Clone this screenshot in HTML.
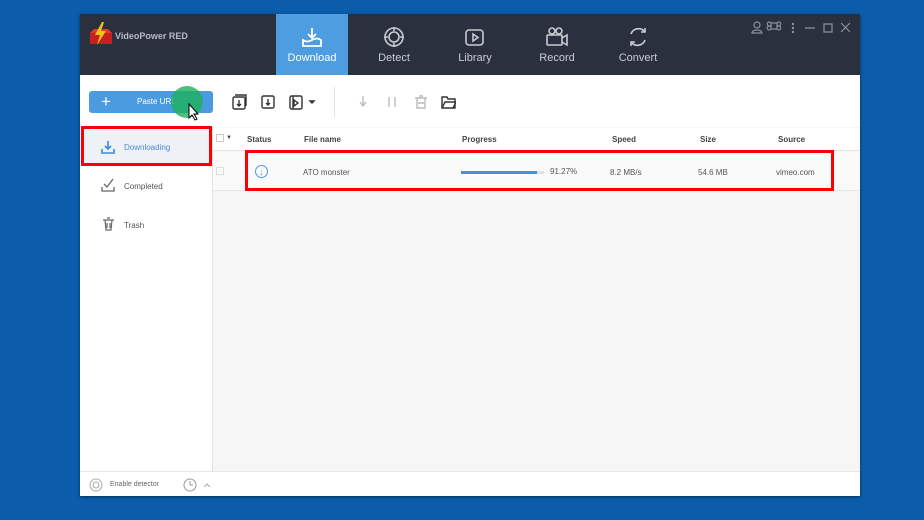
<!DOCTYPE html>
<html><head><style>
*{margin:0;padding:0;box-sizing:border-box}
body{width:924px;height:520px;background:#0b5dab;font-family:"Liberation Sans",sans-serif;position:relative;overflow:hidden}
.a{position:absolute}
.win{left:80px;top:14px;width:780px;height:482px;background:#fff;box-shadow:0 1px 3px rgba(0,0,0,.5)}
.hdr{left:0;top:0;width:780px;height:61px;background:#2a303d}
.tab{top:0;width:72px;height:61px;color:#c8ccd2;font-size:11px;text-align:center}
.tab svg{display:block;margin:12px auto 4px}
.t{font-size:8px;color:#444}
.s{font-size:8px;color:#555}
</style></head><body>
<div class="a win">
 <div class="a hdr">
  <svg class="a" style="left:9px;top:7px" width="24" height="26" viewBox="0 0 24 26"><path d="M1 12h22v11H1z" fill="#c8201e"/><path d="M1 12l4-4h14l4 4z" fill="#e23a2a"/><path d="M13 1L6 14h5l-3 10 9-14h-5l3-9z" fill="#f6c21a"/></svg>
  <div class="a" style="left:35px;top:17px;color:#b8bcc4;font-size:9px;font-weight:bold">VideoPower RED</div>
  <div class="a tab" style="left:196px;background:#4d9de0;color:#fff">
   <svg width="22" height="22" viewBox="0 0 22 22" fill="none" stroke="#fff" stroke-width="1.8"><path d="M11 2v10M7 8l4 4 4-4"/><path d="M2 14c3 2 5 2 9 0s6-2 9 0v6H2z"/></svg>Download</div>
  <div class="a tab" style="left:278px"><svg width="22" height="22" viewBox="0 0 22 22" fill="none" stroke="#c8ccd2" stroke-width="1.6"><circle cx="11" cy="11" r="9"/><circle cx="11" cy="11" r="5"/><path d="M11 1v4M11 17v4M1 11h4M17 11h4"/></svg>Detect</div>
  <div class="a tab" style="left:359px"><svg width="22" height="22" viewBox="0 0 22 22" fill="none" stroke="#c8ccd2" stroke-width="1.6"><rect x="2" y="4" width="17" height="15" rx="3"/><path d="M9 8v7l5-3.5z"/></svg>Library</div>
  <div class="a tab" style="left:441px"><svg width="24" height="22" viewBox="0 0 24 22" fill="none" stroke="#c8ccd2" stroke-width="1.6"><circle cx="7" cy="5" r="3"/><circle cx="14" cy="5" r="3"/><rect x="2" y="9" width="15" height="10" rx="1"/><path d="M17 12l5-3v10l-5-3"/></svg>Record</div>
  <div class="a tab" style="left:522px"><svg width="22" height="22" viewBox="0 0 22 22" fill="none" stroke="#c8ccd2" stroke-width="1.6"><path d="M4 8a8 8 0 0 1 14-2M18 14a8 8 0 0 1-14 2"/><path d="M18 2v4h-4M4 20v-4h4"/></svg>Convert</div>
  <svg class="a" style="left:670px;top:7px" width="104" height="14" viewBox="0 0 104 14" fill="none" stroke="#8d939d" stroke-width="1.2"><circle cx="7" cy="4" r="3"/><path d="M2 12c0-4 10-4 10 0z"/><path d="M21 2h6v6h-6zM21 2a2 2 0 1 0 0 2M27 2a2 2 0 1 1 0 2M21 8a2 2 0 1 1 0-2M27 8a2 2 0 1 0 0-2"/><circle cx="43" cy="3" r=".6"/><circle cx="43" cy="7" r=".6"/><circle cx="43" cy="11" r=".6"/><path d="M55 7h10M74 3h8v8h-8zM91 2l9 9M100 2l-9 9"/></svg>
 </div>
 <div class="a" style="left:9px;top:77px;width:124px;height:22px;background:#4a9be0;border-radius:3px;color:#fff;font-size:8px">
  <span class="a" style="left:12px;top:1px;font-size:17px">+</span><span class="a" style="left:48px;top:6px">Paste URL</span></div>
 <div class="a" style="left:91px;top:72px;width:32px;height:32px;border-radius:50%;background:#1db05a;opacity:.8"></div>
 <svg class="a" style="left:108px;top:89px" width="12" height="18" viewBox="0 0 12 18"><path d="M1 1v14l3-3 3 5 2-1-3-5h4z" fill="#fff" stroke="#000" stroke-width="1"/></svg>
 <svg class="a" style="left:150px;top:79px" width="95" height="18" viewBox="0 0 95 18" fill="none" stroke="#333" stroke-width="1.4"><rect x="3" y="4" width="12" height="12" rx="1.5"/><path d="M5 2h11v11"/><path d="M9 7v6M7 11l2 2 2-2"/><rect x="32" y="3" width="12" height="12" rx="1.5"/><path d="M38 6v6M36 10l2 2 2-2"/><rect x="60" y="3" width="12" height="13" rx="1.5"/><path d="M63 3v13M64 7l4 3-4 3z"/><path d="M80 8l2 2 2-2z" fill="#333"/></svg>
 <div class="a" style="left:254px;top:73px;width:1px;height:30px;background:#e2e2e2"></div>
 <svg class="a" style="left:276px;top:80px" width="100" height="16" viewBox="0 0 100 16" fill="none" stroke="#bbb" stroke-width="1.4"><path d="M7 2v10M4 8l3 4 3-4"/><path d="M33 3v10M39 3v10"/><path d="M59 4h12M61 4v10h8V4M63 2h4M62 9h6"/><path d="M86 3h5l1 2h7v9H86z" stroke="#333"/><path d="M86 14l3-6h11l-3 6" stroke="#333"/></svg>
 <div class="a" style="left:0;top:113px;width:780px;height:1px;background:#e6e6e6"></div>
 <div class="a" style="left:132px;top:113px;width:648px;height:345px;background:#f6f6f6"></div>
 <div class="a" style="left:132px;top:113px;width:1px;height:345px;background:#e0e0e0"></div>
 <div class="a" style="left:0;top:114px;width:132px;height:38px;background:#eef2f7"></div>
 <svg class="a" style="left:21px;top:126px" width="14" height="14" viewBox="0 0 14 14" fill="none" stroke="#3a8ad8" stroke-width="1.6"><path d="M7 1v8M4 6l3 3 3-3"/><path d="M1 9v4h12V9"/></svg>
 <div class="a" style="left:44px;top:129px;font-size:8px;color:#4a8ad0">Downloading</div>
 <svg class="a" style="left:21px;top:164px" width="14" height="14" viewBox="0 0 14 14" fill="none" stroke="#666" stroke-width="1.3"><path d="M1 9v4h12V9"/><path d="M3 6l3 3 6-8"/></svg>
 <div class="a s" style="left:44px;top:168px">Completed</div>
 <svg class="a" style="left:22px;top:203px" width="13" height="14" viewBox="0 0 13 14" fill="none" stroke="#666" stroke-width="1.2"><path d="M1 3h11M3 3l1 10h5l1-10M5 1h3M5 6v5M8 6v5"/></svg>
 <div class="a s" style="left:44px;top:207px">Trash</div>
 <div class="a" style="left:133px;top:114px;width:647px;height:23px;background:#fff;border-bottom:1px solid #e6e6e6"></div>
 <div class="a" style="left:136px;top:120px;width:8px;height:8px;border:1px solid #ccc"></div>
 <div class="a t" style="left:146px;top:121px;font-size:6px">▼</div>
 <div class="a t" style="left:167px;top:121px;font-weight:bold">Status</div>
 <div class="a t" style="left:224px;top:121px;font-weight:bold">File name</div>
 <div class="a t" style="left:382px;top:121px;font-weight:bold">Progress</div>
 <div class="a t" style="left:532px;top:121px;font-weight:bold">Speed</div>
 <div class="a t" style="left:620px;top:121px;font-weight:bold">Size</div>
 <div class="a t" style="left:698px;top:121px;font-weight:bold">Source</div>
 <div class="a" style="left:133px;top:138px;width:647px;height:39px;background:#fafafa;border-bottom:1px solid #e6e6e6"></div>
 <div class="a" style="left:136px;top:153px;width:8px;height:8px;border:1px solid #ddd"></div>
 <div class="a" style="left:175px;top:151px;width:13px;height:13px;border:1px solid #4a9be0;border-radius:50%;color:#4a9be0;font-size:9px;text-align:center;line-height:12px">↓</div>
 <div class="a s" style="left:223px;top:154px">ATO monster</div>
 <div class="a" style="left:381px;top:157px;width:83px;height:3px;background:#e2e2e2"></div>
 <div class="a" style="left:381px;top:157px;width:76px;height:3px;background:#4a90d8"></div>
 <div class="a s" style="left:470px;top:153px">91.27%</div>
 <div class="a s" style="left:530px;top:154px">8.2 MB/s</div>
 <div class="a s" style="left:618px;top:154px">54.6 MB</div>
 <div class="a s" style="left:696px;top:154px">vimeo.com</div>
 <div class="a" style="left:0;top:457px;width:780px;height:1px;background:#e6e6e6"></div>
 <svg class="a" style="left:9px;top:464px" width="14" height="14" viewBox="0 0 14 14" fill="none" stroke="#aaa" stroke-width="1"><circle cx="7" cy="7" r="6"/><circle cx="7" cy="7" r="3"/></svg>
 <div class="a" style="left:30px;top:467px;font-size:7px;color:#666">Enable detector</div>
 <svg class="a" style="left:103px;top:464px" width="14" height="14" viewBox="0 0 14 14" fill="none" stroke="#999" stroke-width="1"><circle cx="7" cy="7" r="6"/><path d="M7 3v4h3"/></svg>
 <svg class="a" style="left:123px;top:468px" width="8" height="6" viewBox="0 0 8 6" fill="none" stroke="#aaa"><path d="M1 5l3-3 3 3"/></svg>
 <div class="a" style="left:1px;top:112px;width:131px;height:40px;border:3px solid #f00"></div>
 <div class="a" style="left:165px;top:136px;width:589px;height:41px;border:3px solid #f00"></div>
</div>
</body></html>
